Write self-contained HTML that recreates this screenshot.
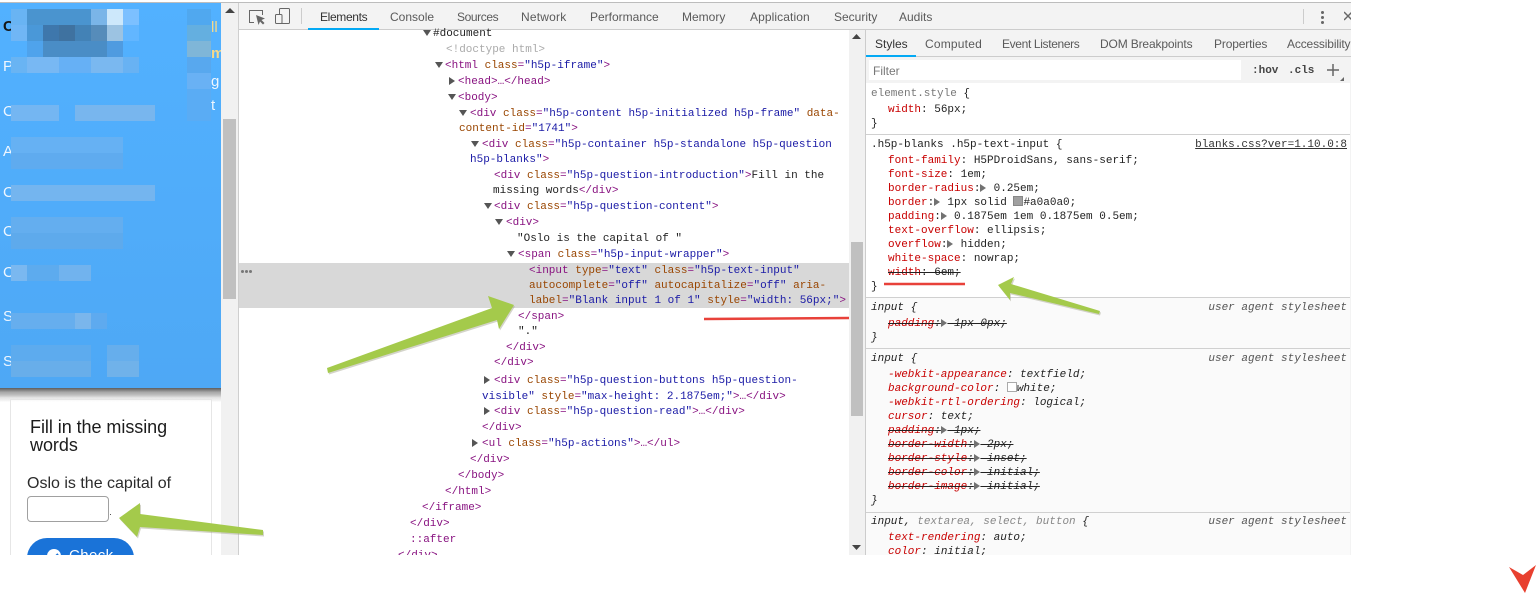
<!DOCTYPE html>
<html><head><meta charset="utf-8"><style>
html,body{margin:0;padding:0;background:#fff;width:1537px;height:595px;overflow:hidden}
body{position:relative;font-family:"Liberation Sans",sans-serif}
.abs,.l,.r,.tab,.m,.ua{position:absolute}
#clip{position:absolute;left:0;top:0;width:1351px;height:555px;overflow:hidden}
.l,.r,.ua{font:11px/16px "Liberation Mono",monospace;white-space:pre;color:#222;margin-top:1px}
.t{color:#881280}.a{color:#994500}.v{color:#1a1aa6}.g{color:#aaa}
.p{color:#c80000}.s{text-decoration:line-through}.i{font-style:italic}
.ua{right:4px;font-style:italic;color:#555}
.tab{font:12px/16px "Liberation Sans",sans-serif;color:#5a5a5a;white-space:pre}
.m{width:16px;height:16px}
.k{display:inline-block;width:0;height:0;border-left:6px solid #727272;border-top:4px solid transparent;border-bottom:4px solid transparent;margin-right:.6px;vertical-align:-1px}
.b{position:absolute;left:3px;width:8px;overflow:hidden;font:15px/18px "Liberation Sans",sans-serif;color:#eef6ff}
</style></head><body>
<div id="clip">
<div class="abs" style="left:0;top:2px;width:1351px;height:1px;background:#bdbdbd"></div>
<!-- left blue panel -->
<div class="abs" style="left:0;top:3px;width:221px;height:385px;background:linear-gradient(#52b1ff,#4ea8f5)"></div>
<div class="abs" style="left:0;top:388px;width:221px;height:14px;background:linear-gradient(#5e5e5e,#a8a8a8 30%,#e6e6e6 70%,#fff)"></div>
<div class="m" style="left:11px;top:9px;background:#69b4f3"></div><div class="m" style="left:27px;top:9px;width:64px;background:#4a94cf"></div><div class="m" style="left:91px;top:9px;background:#7ab5e8"></div><div class="m" style="left:107px;top:9px;background:#cde8fb"></div><div class="m" style="left:123px;top:9px;background:#7cc0ff"></div>
<div class="m" style="left:11px;top:25px;background:#70b6f5"></div><div class="m" style="left:27px;top:25px;background:#4a98d8"></div><div class="m" style="left:43px;top:25px;background:#3e77ac"></div><div class="m" style="left:59px;top:25px;background:#3f72a0"></div><div class="m" style="left:75px;top:25px;background:#4382b6"></div><div class="m" style="left:91px;top:25px;background:#568cba"></div><div class="m" style="left:107px;top:25px;background:#9cc3e2"></div><div class="m" style="left:123px;top:25px;background:#62b6ff"></div>
<div class="m" style="left:27px;top:41px;background:#4fa3ec"></div><div class="m" style="left:43px;top:41px;width:64px;background:#4a8dc6"></div><div class="m" style="left:107px;top:41px;background:#4f9be0"></div>
<div class="m" style="left:11px;top:57px;background:#69b4f3"></div><div class="m" style="left:27px;top:57px;width:32px;background:#78b8f3"></div><div class="m" style="left:59px;top:57px;width:32px;background:#66b0f5"></div><div class="m" style="left:91px;top:57px;width:32px;background:#7ab8f0"></div><div class="m" style="left:123px;top:57px;background:#68b2f3"></div>
<div class="m" style="left:11px;top:105px;width:48px;background:#74b6f2"></div><div class="m" style="left:75px;top:105px;width:80px;background:#78b6ee"></div>
<div class="m" style="left:11px;top:137px;width:112px;background:#66b1f3"></div><div class="m" style="left:11px;top:153px;width:112px;background:#5fabef"></div>
<div class="m" style="left:11px;top:185px;width:144px;background:#74b5ef"></div>
<div class="m" style="left:11px;top:217px;width:112px;background:#64aeef"></div><div class="m" style="left:11px;top:233px;width:112px;background:#5eaaec"></div>
<div class="m" style="left:11px;top:265px;width:16px;background:#7ab8f0"></div><div class="m" style="left:27px;top:265px;width:32px;background:#5dabee"></div><div class="m" style="left:59px;top:265px;width:32px;background:#71b3ee"></div>
<div class="m" style="left:11px;top:313px;width:64px;background:#66aeee"></div><div class="m" style="left:75px;top:313px;background:#7ab6ec"></div><div class="m" style="left:91px;top:313px;background:#5eaaef"></div>
<div class="m" style="left:11px;top:345px;width:80px;background:#5dabee"></div><div class="m" style="left:107px;top:345px;width:32px;background:#66aeec"></div>
<div class="m" style="left:11px;top:361px;width:80px;background:#68aeea"></div><div class="m" style="left:107px;top:361px;width:32px;background:#70b2ea"></div>
<div class="m" style="left:187px;top:9px;width:24px;background:#50a8ef"></div><div class="m" style="left:187px;top:25px;width:24px;background:#64afe0"></div><div class="m" style="left:187px;top:41px;width:24px;background:#7fb6d8"></div><div class="m" style="left:187px;top:57px;width:24px;background:#58a8ee"></div><div class="m" style="left:187px;top:73px;width:24px;background:#69b1f4"></div><div class="m" style="left:187px;top:89px;width:24px;height:32px;background:#5aacf4"></div>
<div class="b" style="top:18px;font-weight:bold;color:#161616">C</div>
<div class="b" style="top:58px">P</div>
<div class="b" style="top:103px">C</div>
<div class="b" style="top:143px">A</div>
<div class="b" style="top:184px">C</div>
<div class="b" style="top:223px">C</div>
<div class="b" style="top:264px">C</div>
<div class="b" style="top:308px">S</div>
<div class="b" style="top:353px">S</div>
<div class="abs" style="left:211px;top:19px;font:15px/18px 'Liberation Sans',sans-serif;color:#f5d98a;width:10px;overflow:hidden">ll</div>
<div class="abs" style="left:211px;top:45px;font:bold 15px/18px 'Liberation Sans',sans-serif;color:#f5d98a;width:10px;overflow:hidden">m</div>
<div class="abs" style="left:211px;top:73px;font:15px/18px 'Liberation Sans',sans-serif;color:#eef6ff;width:10px;overflow:hidden">g</div>
<div class="abs" style="left:211px;top:97px;font:15px/18px 'Liberation Sans',sans-serif;color:#eef6ff;width:10px;overflow:hidden">t</div>
<!-- left scrollbar -->
<div class="abs" style="left:221px;top:3px;width:17px;height:552px;background:#f1f1f1"></div>
<div class="abs" style="left:223px;top:119px;width:13px;height:180px;background:#c0c0c0"></div>
<div class="abs" style="left:238px;top:3px;width:1px;height:552px;background:#cfcfcf"></div>
<!-- card -->
<div class="abs" style="left:10px;top:399px;width:200px;height:170px;border:1px solid #e6e6e6;border-bottom:0;background:#fff"></div>
<div class="abs" style="left:0;top:388px;width:221px;height:14px;background:linear-gradient(rgba(94,94,94,1),rgba(168,168,168,.9) 30%,rgba(230,230,230,.5) 70%,rgba(255,255,255,0))"></div>
<div class="abs" style="left:30px;top:418px;font:18px/18px 'Liberation Sans',sans-serif;letter-spacing:-.05px;color:#1c1c1c;white-space:pre">Fill in the missing
words</div>
<div class="abs" style="left:27px;top:475px;font:16px/18px 'Liberation Sans',sans-serif;color:#2b2b2b;white-space:pre">Oslo is the capital of</div>
<div class="abs" style="left:27px;top:496px;width:80px;height:24px;border:1px solid #a0a0a0;border-radius:4px;background:#fff"></div>
<div class="abs" style="left:110px;top:514px;width:1px;height:1px;background:#555"></div>
<div class="abs" style="left:27px;top:538px;width:107px;height:40px;border-radius:20px;background:#1a73d8"></div>
<div class="abs" style="left:47px;top:549px;width:14px;height:14px;border-radius:50%;background:#fff"></div>
<svg class="abs" style="left:47px;top:549px" width="14" height="14"><path d="M3.500 7l2.500 3 5-5" stroke="#1a73d8" stroke-width="2" fill="none"/></svg>
<div class="abs" style="left:69px;top:547px;font:15px/18px 'Liberation Sans',sans-serif;letter-spacing:.4px;color:#fff">Check</div>

<!-- toolbar -->
<div class="abs" style="left:239px;top:3px;width:1112px;height:26px;background:#f3f3f3;border-bottom:1px solid #ccc"></div>
<svg class="abs" style="left:239px;top:3px" width="70" height="26" fill="none" stroke="#666" stroke-width="1"><path d="M15 19.500H10.500V7.500H23.500V12"/><path d="M17 12l9 3.500-3.500 1.500 3 3-1.500 1.500-3-3-1.500 3.500z" fill="#666" stroke="none"/><rect x="40.500" y="5.500" width="10" height="15" rx="1"/><rect x="36.500" y="11.500" width="6.500" height="9" rx="1" fill="#f3f3f3"/></svg>
<div class="abs" style="left:301px;top:8px;width:1px;height:16px;background:#ccc"></div>
<div class="abs" style="left:308px;top:28px;width:71px;height:2px;background:#03a9f4"></div>
<div class="tab" style="left:320px;top:9px;color:#333;letter-spacing:-.35px">Elements</div>
<div class="tab" style="left:390px;top:9px">Console</div>
<div class="tab" style="left:457px;top:9px;letter-spacing:-.4px">Sources</div>
<div class="tab" style="left:521px;top:9px;letter-spacing:.2px">Network</div>
<div class="tab" style="left:590px;top:9px">Performance</div>
<div class="tab" style="left:682px;top:9px">Memory</div>
<div class="tab" style="left:750px;top:9px;letter-spacing:.1px">Application</div>
<div class="tab" style="left:834px;top:9px">Security</div>
<div class="tab" style="left:899px;top:9px">Audits</div>
<div class="abs" style="left:1303px;top:9px;width:1px;height:15px;background:#ccc"></div>
<div class="abs" style="left:1321px;top:11px;width:3px;height:3px;background:#666;box-shadow:0 5px 0 #666,0 10px 0 #666;border-radius:50%"></div>
<svg class="abs" style="left:1344px;top:11px" width="7" height="11"><path d="M0 1l8 8M8 1L0 9" stroke="#666" stroke-width="1.500" fill="none"/></svg>

<!-- elements -->
<div class="abs" style="left:239px;top:263px;width:610px;height:45px;background:#d8d8d8"></div>
<div class="abs" style="left:241px;top:270px;width:3px;height:3px;background:#777;box-shadow:4px 0 0 #777,8px 0 0 #777;border-radius:50%"></div>
<div class="abs" style="left:849px;top:30px;width:16px;height:525px;background:#f1f1f1"></div>
<div class="abs" style="left:851px;top:242px;width:12px;height:174px;background:#c0c0c0"></div>
<svg class="abs" style="left:0;top:0" width="870" height="555" fill="#555">
<path d="M225 13h10l-5-5zM852 39h9l-4.500-5z" fill="#444"/>
<path d="M423 30h8l-4 6zM435 62h8l-4 6zM448 94h8l-4 6zM459 110h8l-4 6zM471 141h8l-4 6zM484 203h8l-4 6zM495 219h8l-4 6zM507 251h8l-4 6z"/>
<path d="M449 77v8l6-4zM484 376v8l6-4zM484 407v8l6-4zM472 439v8l6-4z"/>
<path d="M852 545h9l-4.500 5z" fill="#444"/>
</svg>
<div class="l" style="left:433px;top:25px">#document</div>
<div class="l g" style="left:446px;top:41px">&lt;!doctype html&gt;</div>
<div class="l t" style="left:445px;top:57px">&lt;html <span class="a">class</span>=<span class="v">"h5p-iframe"</span>&gt;</div>
<div class="l t" style="left:458px;top:73px">&lt;head&gt;…&lt;/head&gt;</div>
<div class="l t" style="left:458px;top:89px">&lt;body&gt;</div>
<div class="l t" style="left:470px;top:105px">&lt;div <span class="a">class</span>=<span class="v">"h5p-content h5p-initialized h5p-frame"</span> <span class="a">data-</span></div>
<div class="l t" style="left:459px;top:120px"><span class="a">content-id</span>=<span class="v">"1741"</span>&gt;</div>
<div class="l t" style="left:482px;top:136px">&lt;div <span class="a">class</span>=<span class="v">"h5p-container h5p-standalone h5p-question</span></div>
<div class="l t" style="left:470px;top:151px"><span class="v">h5p-blanks"</span>&gt;</div>
<div class="l t" style="left:494px;top:167px">&lt;div <span class="a">class</span>=<span class="v">"h5p-question-introduction"</span>&gt;<span style="color:#222">Fill in the</span></div>
<div class="l t" style="left:493px;top:182px"><span style="color:#222">missing words</span>&lt;/div&gt;</div>
<div class="l t" style="left:494px;top:198px">&lt;div <span class="a">class</span>=<span class="v">"h5p-question-content"</span>&gt;</div>
<div class="l t" style="left:506px;top:214px">&lt;div&gt;</div>
<div class="l" style="left:517px;top:230px">"Oslo is the capital of "</div>
<div class="l t" style="left:518px;top:246px">&lt;span <span class="a">class</span>=<span class="v">"h5p-input-wrapper"</span>&gt;</div>
<div class="l t" style="left:529px;top:262px">&lt;input <span class="a">type</span>=<span class="v">"text"</span> <span class="a">class</span>=<span class="v">"h5p-text-input"</span></div>
<div class="l t" style="left:529px;top:277px"><span class="a">autocomplete</span>=<span class="v">"off"</span> <span class="a">autocapitalize</span>=<span class="v">"off"</span> <span class="a">aria-</span></div>
<div class="l t" style="left:529px;top:292px"><span class="a">label</span>=<span class="v">"Blank input 1 of 1"</span> <span class="a">style</span>=<span class="v">"width: 56px;"</span>&gt;</div>
<div class="l t" style="left:518px;top:308px">&lt;/span&gt;</div>
<div class="l" style="left:518px;top:323px">"."</div>
<div class="l t" style="left:506px;top:339px">&lt;/div&gt;</div>
<div class="l t" style="left:494px;top:354px">&lt;/div&gt;</div>
<div class="l t" style="left:494px;top:372px">&lt;div <span class="a">class</span>=<span class="v">"h5p-question-buttons h5p-question-</span></div>
<div class="l t" style="left:482px;top:388px"><span class="v">visible"</span> <span class="a">style</span>=<span class="v">"max-height: 2.1875em;"</span>&gt;…&lt;/div&gt;</div>
<div class="l t" style="left:494px;top:403px">&lt;div <span class="a">class</span>=<span class="v">"h5p-question-read"</span>&gt;…&lt;/div&gt;</div>
<div class="l t" style="left:482px;top:419px">&lt;/div&gt;</div>
<div class="l t" style="left:482px;top:435px">&lt;ul <span class="a">class</span>=<span class="v">"h5p-actions"</span>&gt;…&lt;/ul&gt;</div>
<div class="l t" style="left:470px;top:451px">&lt;/div&gt;</div>
<div class="l t" style="left:458px;top:467px">&lt;/body&gt;</div>
<div class="l t" style="left:445px;top:483px">&lt;/html&gt;</div>
<div class="l t" style="left:422px;top:499px">&lt;/iframe&gt;</div>
<div class="l t" style="left:410px;top:515px">&lt;/div&gt;</div>
<div class="l t" style="left:410px;top:531px">::after</div>
<div class="l t" style="left:398px;top:547px">&lt;/div&gt;</div>

<!-- sidebar -->
<div class="abs" style="left:865px;top:30px;width:486px;height:525px;background:#fff;border-left:1px solid #ccc;overflow:hidden" id="side">
<div class="abs" style="left:0;top:0;width:486px;height:26px;background:#f3f3f3;border-bottom:1px solid #ccc"></div>
<div class="abs" style="left:0;top:25px;width:50px;height:2px;background:#03a9f4"></div>
<div class="abs" style="left:0;top:27px;width:486px;height:26px;background:#f3f3f3"></div>
<div class="abs" style="left:3px;top:30px;width:372px;height:20px;background:#fff"></div>
<div class="abs" style="left:484px;top:53px;width:2px;height:472px;background:#f3f3f3"></div>
<div class="abs" style="left:0;top:104px;width:484px;height:1px;background:#d0d0d0"></div>
<div class="abs" style="left:0;top:267px;width:484px;height:1px;background:#d0d0d0"></div>
<div class="abs" style="left:0;top:318px;width:484px;height:1px;background:#d0d0d0"></div>
<div class="abs" style="left:0;top:482px;width:484px;height:1px;background:#d0d0d0"></div>
<div class="abs" style="left:0;top:268px;width:484px;height:50px;background:#fafafa"></div>
<div class="abs" style="left:0;top:319px;width:484px;height:163px;background:#fafafa"></div>
<div class="abs" style="left:0;top:483px;width:484px;height:42px;background:#fafafa"></div>
</div>
<div class="tab" style="left:875px;top:36px;color:#333">Styles</div>
<div class="tab" style="left:925px;top:36px;letter-spacing:.2px">Computed</div>
<div class="tab" style="left:1002px;top:36px;letter-spacing:-.35px">Event Listeners</div>
<div class="tab" style="left:1100px;top:36px;letter-spacing:-.15px">DOM Breakpoints</div>
<div class="tab" style="left:1214px;top:36px;letter-spacing:-.15px">Properties</div>
<div class="tab" style="left:1287px;top:36px;letter-spacing:-.15px">Accessibility</div>
<div class="tab" style="left:873px;top:63px;color:#777">Filter</div>
<div class="l" style="left:1252px;top:62px;font-weight:bold;font-size:11px;color:#444">:hov</div>
<div class="l" style="left:1288px;top:62px;font-weight:bold;font-size:11px;color:#444">.cls</div>
<svg class="abs" style="left:1326px;top:62px" width="20" height="20"><path d="M7 2v12M1 8h12" stroke="#666" stroke-width="1.500"/><path d="M18 15v4h-4z" fill="#666"/></svg>

<div class="l" style="left:871px;top:85px"><span style="color:#777">element.style</span> {</div>
<div class="l" style="left:888px;top:101px"><span class="p">width</span>: 56px;</div>
<div class="l" style="left:871px;top:115px">}</div>
<div class="l" style="left:871px;top:136px">.h5p-blanks .h5p-text-input {</div>
<div class="l" style="right:4px;top:136px;text-decoration:underline;color:#333">blanks.css?ver=1.10.0:8</div>
<div class="l" style="left:888px;top:152px"><span class="p">font-family</span>: H5PDroidSans, sans-serif;</div>
<div class="l" style="left:888px;top:166px"><span class="p">font-size</span>: 1em;</div>
<div class="l" style="left:888px;top:180px"><span class="p">border-radius</span>:<span class="k"></span> 0.25em;</div>
<div class="l" style="left:888px;top:194px"><span class="p">border</span>:<span class="k"></span> 1px solid <span style="display:inline-block;width:10px;height:10px;background:#a0a0a0;border:1px solid #888;box-sizing:border-box;vertical-align:-1px"></span>#a0a0a0;</div>
<div class="l" style="left:888px;top:208px"><span class="p">padding</span>:<span class="k"></span> 0.1875em 1em 0.1875em 0.5em;</div>
<div class="l" style="left:888px;top:222px"><span class="p">text-overflow</span>: ellipsis;</div>
<div class="l" style="left:888px;top:236px"><span class="p">overflow</span>:<span class="k"></span> hidden;</div>
<div class="l" style="left:888px;top:250px"><span class="p">white-space</span>: nowrap;</div>
<div class="l s" style="left:888px;top:264px"><span class="p">width</span>: 6em;</div>
<div class="l" style="left:871px;top:278px">}</div>
<div class="l i" style="left:871px;top:299px">input {</div>
<div class="ua" style="top:299px;right:4px">user agent stylesheet</div>
<div class="l s i" style="left:888px;top:315px"><span class="p">padding</span>:<span class="k"></span> 1px 0px;</div>
<div class="l i" style="left:871px;top:329px">}</div>
<div class="l i" style="left:871px;top:350px">input {</div>
<div class="ua" style="top:350px;right:4px">user agent stylesheet</div>
<div class="l i" style="left:888px;top:366px"><span class="p">-webkit-appearance</span>: textfield;</div>
<div class="l i" style="left:888px;top:380px"><span class="p">background-color</span>: <span style="display:inline-block;width:10px;height:10px;background:#fff;border:1px solid #aaa;box-sizing:border-box;vertical-align:-1px"></span>white;</div>
<div class="l i" style="left:888px;top:394px"><span class="p">-webkit-rtl-ordering</span>: logical;</div>
<div class="l i" style="left:888px;top:408px"><span class="p">cursor</span>: text;</div>
<div class="l s i" style="left:888px;top:422px"><span class="p">padding</span>:<span class="k"></span> 1px;</div>
<div class="l s i" style="left:888px;top:436px"><span class="p">border-width</span>:<span class="k"></span> 2px;</div>
<div class="l s i" style="left:888px;top:450px"><span class="p">border-style</span>:<span class="k"></span> inset;</div>
<div class="l s i" style="left:888px;top:464px"><span class="p">border-color</span>:<span class="k"></span> initial;</div>
<div class="l s i" style="left:888px;top:478px"><span class="p">border-image</span>:<span class="k"></span> initial;</div>
<div class="l i" style="left:871px;top:492px">}</div>
<div class="l i" style="left:871px;top:513px">input, <span style="color:#888">textarea, select, button</span> {</div>
<div class="ua" style="top:513px;right:4px">user agent stylesheet</div>
<div class="l i" style="left:888px;top:529px"><span class="p">text-rendering</span>: auto;</div>
<div class="l i" style="left:888px;top:543px"><span class="p">color</span>: initial;</div>
</div>

<!-- annotations -->
<svg class="abs" style="left:0;top:0" width="1537" height="595">
<path d="M704 319L849 318" stroke="#e8413a" stroke-width="2.500"/>
<path d="M884 284H965" stroke="#e8413a" stroke-width="2.500"/>
<g fill="#a0a08a" opacity=".45" transform="translate(1 1.500)">
<path d="M327 368L492 308 488 296 514 305 499 329 497 320 328 373z"/>
<path d="M998 285L1014 277 1011 284 1100 311 1099 314 1010 293 1010 300z"/>
<path d="M119 518L140 503 140 514 263 530 263 535 140 527 137 537z"/>
</g>
<g fill="#a4ca4b">
<path d="M327 368L492 308 488 296 514 305 499 329 497 320 328 373z"/>
<path d="M998 285L1014 277 1011 284 1100 311 1099 314 1010 293 1010 300z"/>
<path d="M119 518L140 503 140 514 263 530 263 535 140 527 137 537z"/>
</g>
<path d="M1509 567L1523 575 1536 565 1525 593z" fill="#e8402f"/>
</svg>
</body></html>
